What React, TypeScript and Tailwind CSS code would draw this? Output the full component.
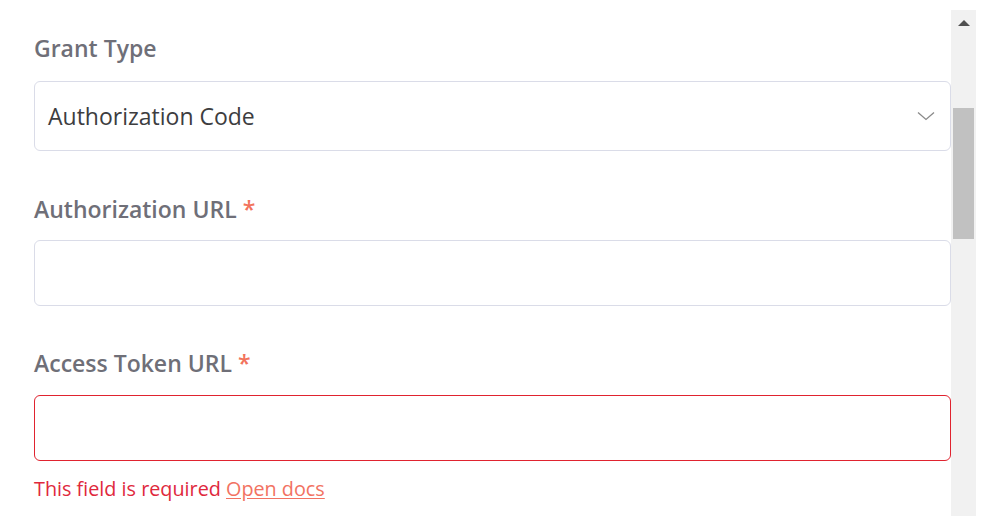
function Label({ text, required }: { text: string; required?: boolean }) {
  return (
    <p className="text-[23px] leading-[30px] font-semibold text-[#6f6f78]">
      {text}
      {required && <span className="text-[#f2735c] ml-[6px]">*</span>}
    </p>
  );
}

export default function App() {
  return (
    <div className="w-[997px] h-[516px] bg-white overflow-hidden flex font-['Open_Sans',sans-serif]">
      <div className="flex-1 flex pt-[10px]">
        <div className="w-[951px] pl-[34px] pt-[23px] flex flex-col">
          <Label text="Grant Type" />
          <div className="mt-[18px] h-[70px] border border-[#dadce8] rounded-md flex items-center justify-between pl-[13px] pr-[15px]">
            <span className="text-[23px] text-[#3d3d3f]">Authorization Code</span>
            <svg width="18" height="10" viewBox="0 0 18 10" fill="none" stroke="#8a8a8a" strokeWidth="1.3">
              <path d="M1 1.5 L9 8.5 L17 1.5" />
            </svg>
          </div>

          <div className="mt-[43px]">
            <Label text="Authorization URL" required />
          </div>
          <div className="mt-[16px] h-[66px] border border-[#dadce8] rounded-md" />

          <div className="mt-[42px]">
            <Label text="Access Token URL" required />
          </div>
          <div className="mt-[17px] h-[66px] border border-[#e0232f] rounded-md" />
          <p className="mt-[14px] text-[19.8px] leading-[28px] text-[#e0283c]">
            This field is required{" "}
            <a href="#" className="text-[#f27262] underline underline-offset-2">Open docs</a>
          </p>
        </div>
        <div className="w-[25px] bg-[#f1f1f1] flex flex-col items-center">
          <div className="mt-[10px] w-0 h-0 border-l-[6px] border-r-[6px] border-b-[6px] border-l-transparent border-r-transparent border-b-[#505050]" />
          <div className="mt-[82px] w-[21px] h-[131px] bg-[#c1c1c1]" />
        </div>
      </div>
    </div>
  );
}
